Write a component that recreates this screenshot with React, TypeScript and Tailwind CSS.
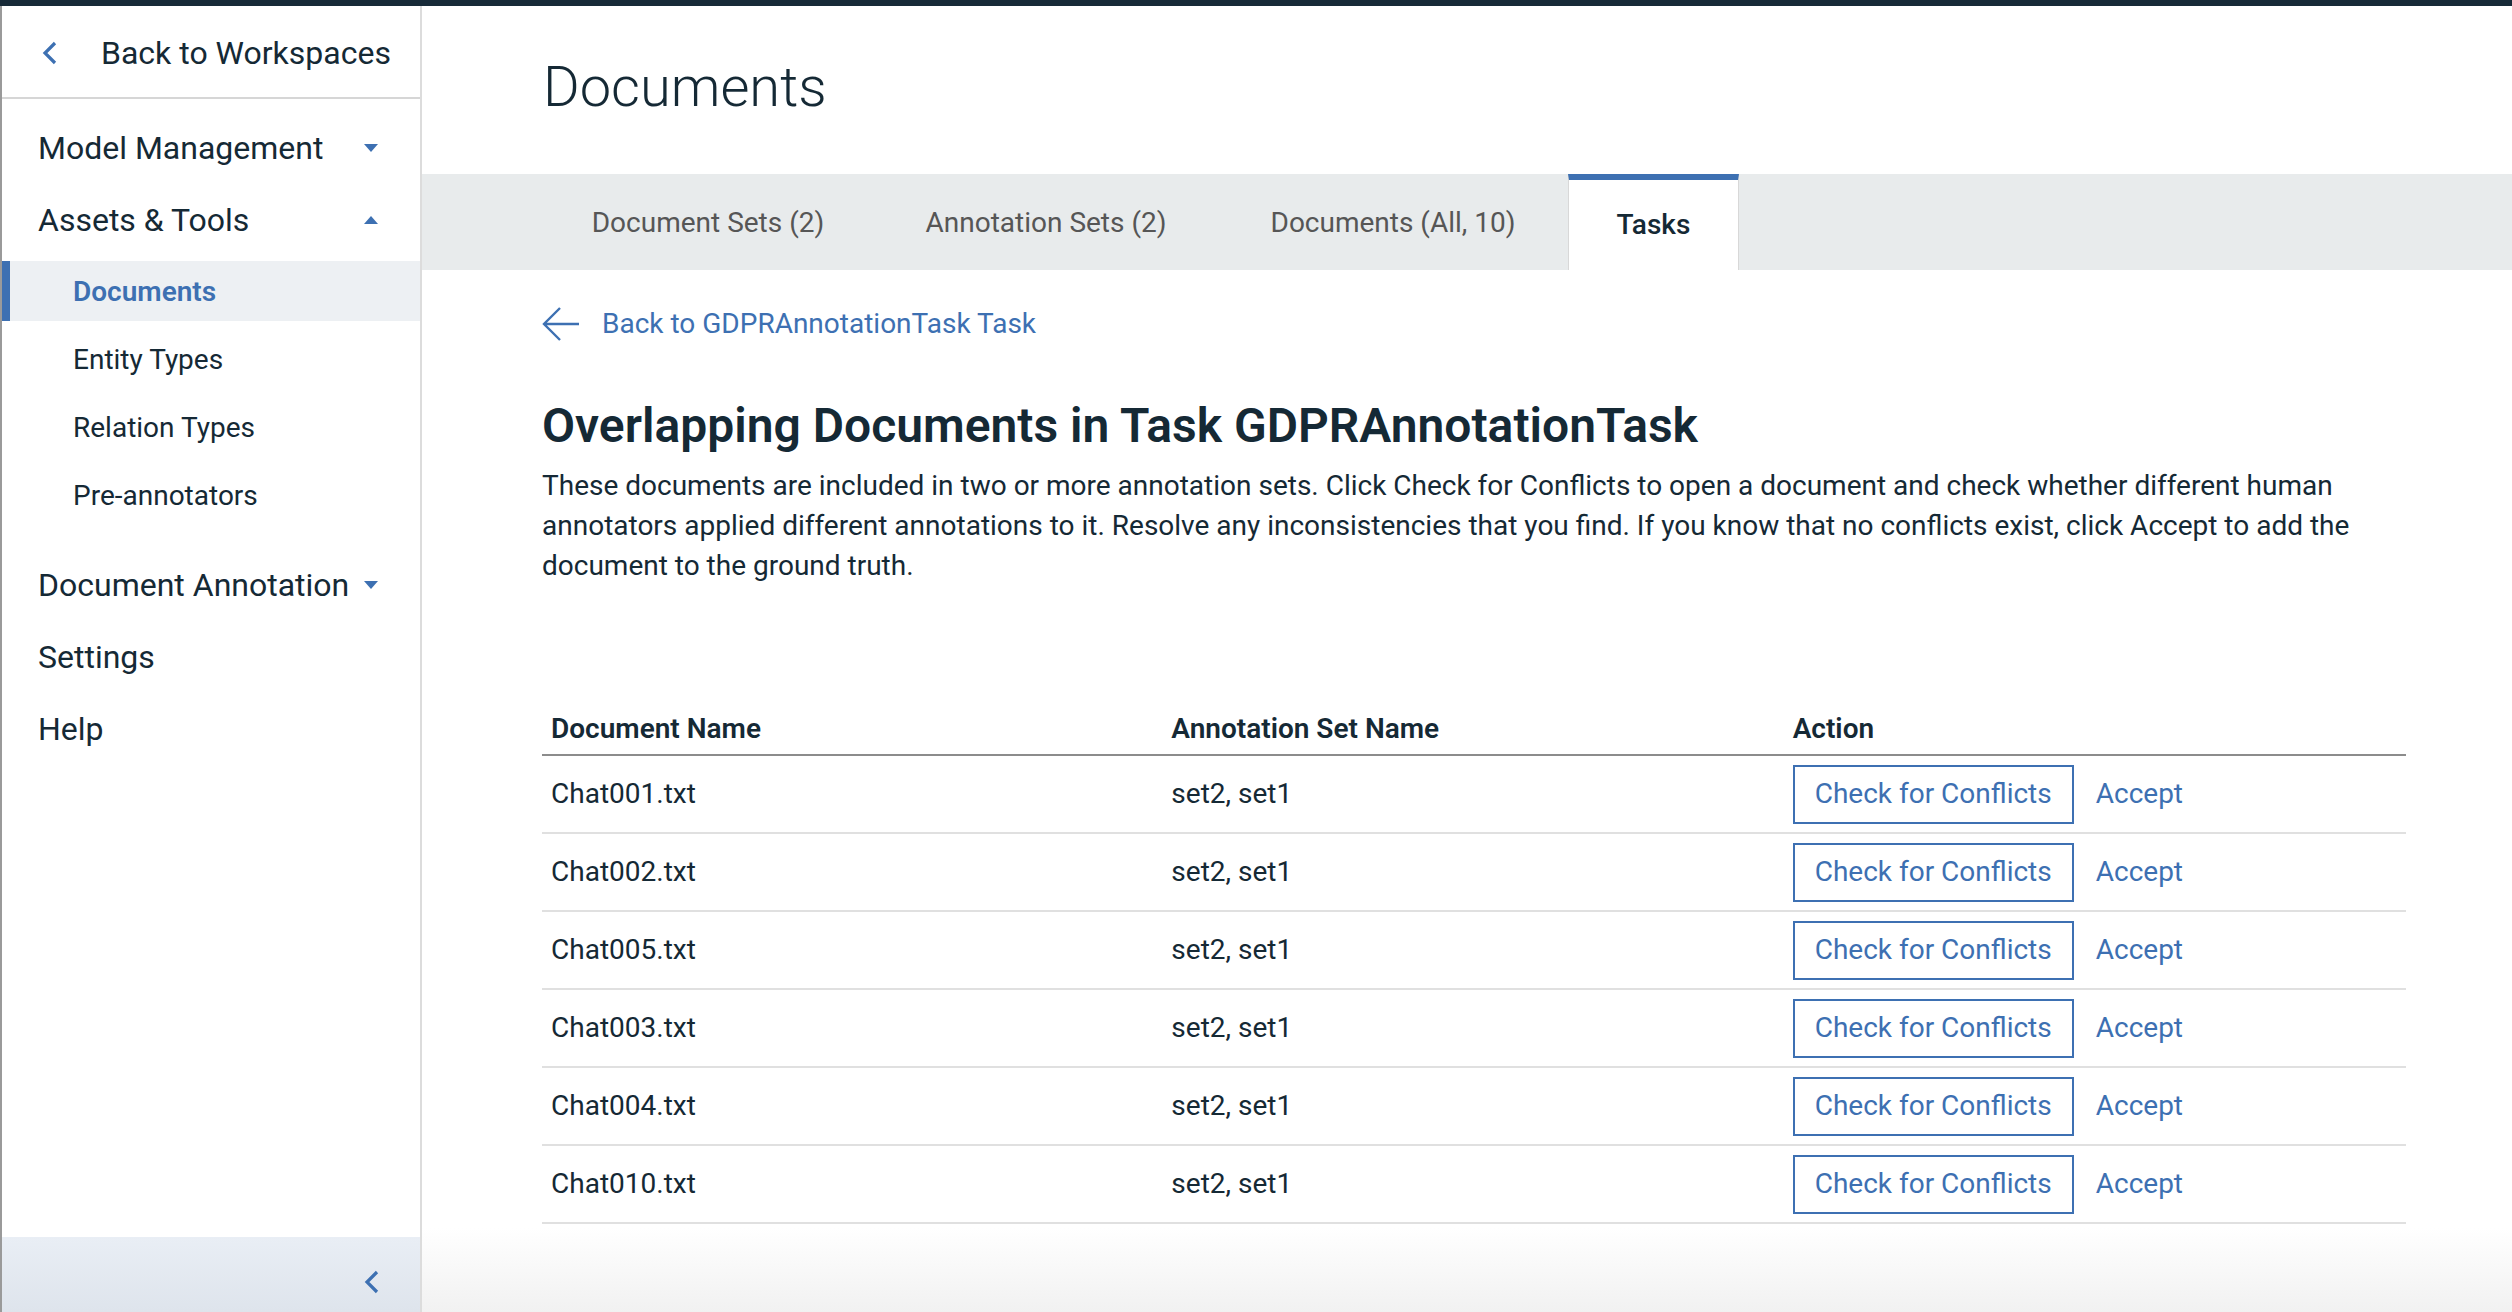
import React from "react";

type Row = { name: string; sets: string };

const rows: Row[] = [
  { name: "Chat001.txt", sets: "set2, set1" },
  { name: "Chat002.txt", sets: "set2, set1" },
  { name: "Chat005.txt", sets: "set2, set1" },
  { name: "Chat003.txt", sets: "set2, set1" },
  { name: "Chat004.txt", sets: "set2, set1" },
  { name: "Chat010.txt", sets: "set2, set1" },
];

function Caret({ up }: { up?: boolean }) {
  return (
    <svg width="14" height="8" viewBox="0 0 14 8" className="shrink-0">
      {up ? <path d="M0 8 L7 0 L14 8 Z" fill="#3d70b2" /> : <path d="M0 0 L14 0 L7 8 Z" fill="#3d70b2" />}
    </svg>
  );
}

function ChevronLeft({ w = 16, h = 24 }: { w?: number; h?: number }) {
  return (
    <svg width={w} height={h} viewBox="0 0 16 24" className="shrink-0">
      <path d="M13 2 L3 12 L13 22" fill="none" stroke="#3d70b2" strokeWidth="3.2" />
    </svg>
  );
}

function Sidebar() {
  return (
    <aside className="flex w-[422px] shrink-0 flex-col border-r-2 border-l-2 border-r-[#dcdcdc] border-l-[#9a9a9a] bg-white">
      <div className="flex h-[93px] items-center border-b-2 border-[#d6d6d6] pt-[3px]">
        <div className="ml-[40px] w-[59px]">
          <ChevronLeft />
        </div>
        <span className="text-[32px] text-[#152935]">Back to Workspaces</span>
      </div>

      <nav className="pt-[13px]">
        <div className="flex h-[72px] items-center justify-between pl-[36px] pr-[42px]">
          <span className="text-[32px] text-[#152935]">Model Management</span>
          <Caret />
        </div>
        <div className="flex h-[71px] items-center justify-between pl-[36px] pr-[42px]">
          <span className="text-[32px] text-[#152935]">Assets &amp; Tools</span>
          <Caret up />
        </div>

        <ul className="mt-[6px] flex flex-col gap-[8px]">
          <li className="flex h-[60px] items-center border-l-[8px] border-[#3d70b2] bg-[#edf0f3] pl-[63px] pt-[2px] text-[28px] font-semibold text-[#3d70b2]">
            Documents
          </li>
          <li className="flex h-[60px] items-center pl-[71px] pt-[2px] text-[28px] text-[#152935]">Entity Types</li>
          <li className="flex h-[60px] items-center pl-[71px] pt-[2px] text-[28px] text-[#152935]">Relation Types</li>
          <li className="flex h-[60px] items-center pl-[71px] pt-[2px] text-[28px] text-[#152935]">Pre-annotators</li>
        </ul>

        <div className="mt-[24px] flex h-[72px] items-center justify-between pl-[36px] pr-[42px]">
          <span className="text-[32px] text-[#152935]">Document Annotation</span>
          <Caret />
        </div>
        <div className="flex h-[72px] items-center pl-[36px] text-[32px] text-[#152935]">Settings</div>
        <div className="flex h-[72px] items-center pl-[36px] text-[32px] text-[#152935]">Help</div>
      </nav>

      <div className="mt-auto flex h-[75px] items-center justify-end bg-[linear-gradient(180deg,#e9eef5,#dee4ec)] pr-[40px] pt-[14px]">
        <ChevronLeft w={16} h={26} />
      </div>
    </aside>
  );
}

function Tabs() {
  return (
    <div className="flex h-[96px] bg-[#e8ebec] pl-[120px]">
      <div className="flex w-[332px] items-center justify-center pt-[2px] text-[28px] text-[#565656]">Document Sets (2)</div>
      <div className="flex w-[344px] items-center justify-center pt-[2px] text-[28px] text-[#565656]">Annotation Sets (2)</div>
      <div className="flex w-[350px] items-center justify-center pt-[2px] text-[28px] text-[#565656]">Documents (All, 10)</div>
      <div className="flex w-[171px] items-center justify-center border-x border-t-[6px] border-x-[#d8d8d8] border-t-[#3d70b2] bg-white text-[28px] font-medium text-[#152935]">
        Tasks
      </div>
    </div>
  );
}

export default function App() {
  return (
    <div
      className="flex h-[1312px] w-[2512px] flex-col overflow-hidden bg-white"
      style={{ fontFamily: "Roboto, 'Liberation Sans', sans-serif" }}
    >
      <div className="h-[6px] shrink-0 bg-[#172a38]" />
      <div className="flex min-h-0 flex-1">
        <Sidebar />

        <main className="flex min-w-0 flex-1 flex-col bg-[linear-gradient(180deg,#ffffff_0px,#ffffff_1222px,#f1f1f1_1306px)]">
          <div className="h-[168px] shrink-0 pl-[121px] pt-[53px]">
            <h1 className="text-[56px] font-light leading-none text-[#152935]">Documents</h1>
          </div>

          <Tabs />

          <section className="pl-[120px] pr-[106px]">
            <div className="mt-[36px] flex h-[36px] items-center gap-[22px]">
              <svg width="38" height="36" viewBox="0 0 38 36" className="shrink-0">
                <path d="M37 18 H3 M18 2 L2 18 L18 34" fill="none" stroke="#3d70b2" strokeWidth="2.4" />
              </svg>
              <span className="text-[28px] text-[#3d70b2]">Back to GDPRAnnotationTask Task</span>
            </div>

            <h2 className="mt-[56px] text-[48px] font-semibold leading-[56px] text-[#152935]">
              Overlapping Documents in Task GDPRAnnotationTask
            </h2>
            <p className="mt-[12px] text-[28px] leading-[40px] text-[#152935]">
              These documents are included in two or more annotation sets. Click Check for Conflicts to open a document and check whether different human
              <br />
              annotators applied different annotations to it. Resolve any inconsistencies that you find. If you know that no conflicts exist, click Accept to add the
              <br />
              document to the ground truth.
            </p>

            <div className="mt-[111px]">
              <div className="grid h-[59px] grid-cols-3 items-center border-b-2 border-[#8c8c8c] pt-[6px] text-[28px] font-semibold text-[#152935]">
                <div className="pl-[9px]">Document Name</div>
                <div className="pl-[8px]">Annotation Set Name</div>
                <div className="pl-[8px]">Action</div>
              </div>
              {rows.map((row) => (
                <div
                  key={row.name}
                  className="grid h-[78px] grid-cols-3 items-center border-b-2 border-[#e0e0e0] text-[28px] text-[#152935]"
                >
                  <div className="pl-[9px]">{row.name}</div>
                  <div className="pl-[8px]">{row.sets}</div>
                  <div className="flex items-center pl-[8px]">
                    <button className="h-[59px] border-2 border-[#3d70b2] px-[20px] text-[28px] text-[#3d70b2]">
                      Check for Conflicts
                    </button>
                    <button className="ml-[22px] text-[28px] text-[#3d70b2]">Accept</button>
                  </div>
                </div>
              ))}
            </div>
          </section>
        </main>
      </div>
    </div>
  );
}
